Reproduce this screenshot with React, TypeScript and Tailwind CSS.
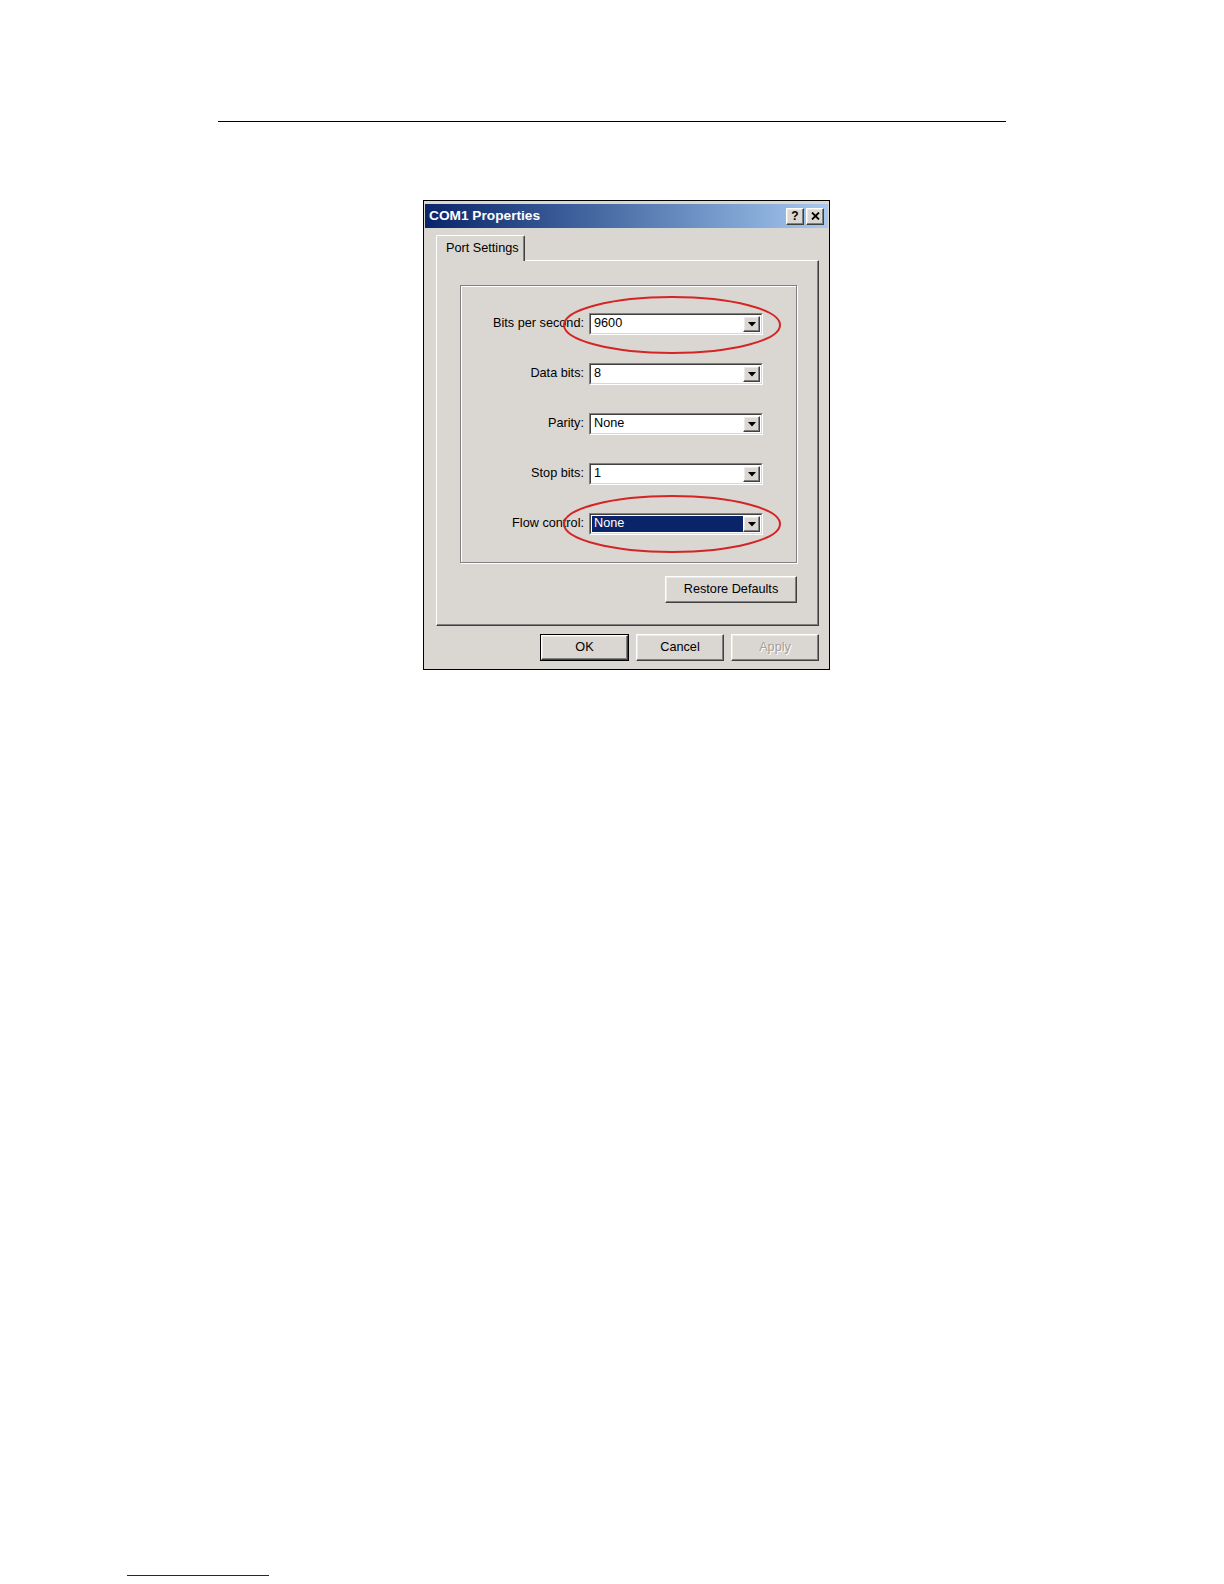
const font = { fontFamily: '"Liberation Sans", Arial, sans-serif' }

const raised =
  'border border-t-white border-l-white border-b-[#404040] border-r-[#404040] shadow-[inset_-1px_-1px_0_#808080,inset_1px_1px_0_#ece9e5]'

function ComboBox({ value, selected }: { value: string; selected?: boolean }) {
  return (
    <div className="w-[174px] h-[22px] flex border border-t-[#808080] border-l-[#808080] border-b-white border-r-white">
      <div className="flex-1 flex items-center bg-white border border-t-[#404040] border-l-[#404040] border-b-[#dad6d2] border-r-[#dad6d2] p-px">
        <div
          className={`flex-1 h-full flex items-center pl-[2px] text-[12.7px] ${
            selected ? 'bg-[#0a246a] text-white' : 'text-black'
          }`}
        >
          {value}
        </div>
        <div className={`w-[17px] h-full bg-[#dad6d2] flex items-center justify-center ${raised}`}>
          <svg width="8" height="5" viewBox="0 0 8 5">
            <path d="M0 0h8L4 4.5z" fill="#000" />
          </svg>
        </div>
      </div>
    </div>
  )
}

function Row({ label, value, selected }: { label: string; value: string; selected?: boolean }) {
  return (
    <div className="flex items-center h-[22px]">
      <div className="w-[123px] text-right text-[12.7px] text-black">{label}</div>
      <div className="ml-[5px]">
        <ComboBox value={value} selected={selected} />
      </div>
    </div>
  )
}

function Button({ label, w, disabled, isDefault }: { label: string; w: string; disabled?: boolean; isDefault?: boolean }) {
  const inner = (
    <div
      className={`h-full flex items-center justify-center text-[12.7px] bg-[#dad6d2] ${raised} ${
        disabled ? 'text-[#a4a09c] [text-shadow:1px_1px_0_#fff]' : 'text-black'
      }`}
    >
      {label}
    </div>
  )
  if (isDefault) {
    return <div className={`${w} h-[27px] border border-black`}>{inner}</div>
  }
  return <div className={`${w} h-[27px]`}>{inner}</div>
}

export default function App() {
  const rows = [
    { label: 'Bits per second:', value: '9600' },
    { label: 'Data bits:', value: '8' },
    { label: 'Parity:', value: 'None' },
    { label: 'Stop bits:', value: '1' },
    { label: 'Flow control:', value: 'None', selected: true },
  ]

  return (
    <div className="w-[1224px] h-[1584px] bg-white flex flex-col" style={font}>
      <div className="mt-[121px] ml-[218px] w-[788px] h-px bg-black" />

      <div className="relative mt-[78px] ml-[423px] w-[407px] h-[470px] border border-black bg-[#dad6d2] pt-[3px] px-px flex flex-col">
        {/* title bar */}
        <div className="h-[24px] flex items-center pl-[4px] pr-[4px] bg-gradient-to-r from-[#0a246a] to-[#a6caf0]">
          <span className="text-white font-bold text-[13.7px]">COM1 Properties</span>
          <div className="ml-auto flex gap-[2px]">
            <div className={`w-[18px] h-[17px] bg-[#dad6d2] flex items-center justify-center text-[12px] font-bold text-black ${raised}`}>
              ?
            </div>
            <div className={`w-[18px] h-[17px] bg-[#dad6d2] flex items-center justify-center ${raised}`}>
              <svg width="9" height="8" viewBox="0 0 9 8">
                <path d="M1 0.5l7 7M8 0.5l-7 7" stroke="#000" strokeWidth="1.8" />
              </svg>
            </div>
          </div>
        </div>

        {/* body */}
        <div className="flex-1 flex flex-col pl-[11px] pr-[9px] pt-[7px]">
          <div className="flex">
            <div className="relative z-10 w-[89px] h-[26px] -mb-px bg-[#dad6d2] border border-b-0 border-t-white border-l-white border-r-[#404040] rounded-t-[2px] shadow-[inset_-1px_0_0_#808080] flex items-center pl-[9px] text-[12.7px] text-black">
              Port Settings
            </div>
          </div>
          <div className="h-[366px] border border-t-white border-l-white border-b-[#404040] border-r-[#404040] shadow-[inset_-1px_-1px_0_#808080] flex flex-col pl-[23px] pr-[21px] pt-[24px]">
            <div className="w-[337px] h-[278px] border border-[#808080] shadow-[1px_1px_0_#fff,inset_1px_1px_0_#fff] flex flex-col gap-[28px] pt-[27px]">
              {rows.map((r) => (
                <Row key={r.label} label={r.label} value={r.value} selected={r.selected} />
              ))}
            </div>
            <div className="flex justify-end mt-[13px]">
              <Button label="Restore Defaults" w="w-[132px]" />
            </div>
          </div>

          <div className="flex justify-end gap-[7px] mt-[8px]">
            <Button label="OK" w="w-[89px]" isDefault />
            <Button label="Cancel" w="w-[88px]" />
            <Button label="Apply" w="w-[88px]" disabled />
          </div>
        </div>

        {/* red markers */}
        <svg className="absolute left-[138px] top-[94px]" width="220" height="60" viewBox="0 0 220 60">
          <ellipse cx="110" cy="30" rx="108" ry="28" fill="none" stroke="#d42424" strokeWidth="2" />
        </svg>
        <svg className="absolute left-[138px] top-[293px]" width="220" height="60" viewBox="0 0 220 60">
          <ellipse cx="110" cy="30" rx="108" ry="28" fill="none" stroke="#d42424" strokeWidth="2" />
        </svg>
      </div>

      <div className="mt-auto mb-[8px] ml-[127px] w-[142px] h-[1.5px] bg-[#1c1c8c]" />
    </div>
  )
}
